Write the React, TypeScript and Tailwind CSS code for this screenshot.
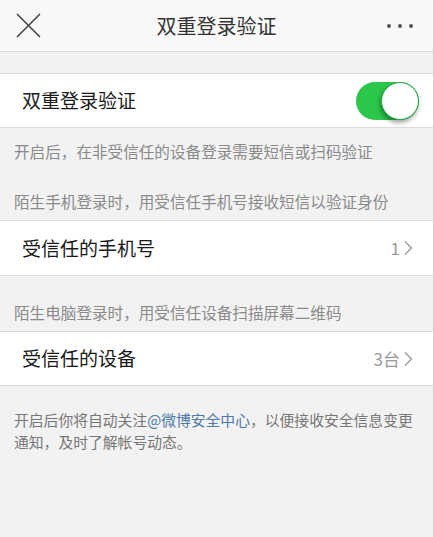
import React from "react";

const font = { fontFamily: '"Noto Sans CJK SC", "Noto Sans", sans-serif' };

function Chevron() {
  return (
    <svg width="10" height="16" viewBox="0 0 10 16" className="ml-[3px]">
      <path d="M2 1.5 L8.5 8 L2 14.5" fill="none" stroke="#9a9a9a" strokeWidth="1.3" />
    </svg>
  );
}

export default function App() {
  return (
    <div className="w-[434px] h-[537px] bg-[#f2f2f2] border-r border-[#d0d0d0] text-[#1a1a1a]" style={font}>
      {/* header */}
      <div className="h-[52px] bg-[#f8f8f8] border-b border-[#dadada] flex items-center justify-between relative">
        <svg width="26" height="26" viewBox="0 0 26 26" className="ml-[15px]">
          <path d="M2 1 L25 24 M25 1 L2 24" stroke="#454545" strokeWidth="1.6" fill="none" />
        </svg>
        <div className="absolute left-0 right-0 text-center text-[20px] text-[#333] pointer-events-none">双重登录验证</div>
        <div className="flex gap-[7px] mr-[20px]">
          <span className="w-[4px] h-[4px] rounded-full bg-[#555]" />
          <span className="w-[4px] h-[4px] rounded-full bg-[#555]" />
          <span className="w-[4px] h-[4px] rounded-full bg-[#555]" />
        </div>
      </div>
      <div className="h-[21px]" />
      {/* toggle row */}
      <div className="h-[55px] bg-white border-y border-[#dadada] flex items-center justify-between pl-[22px] pr-[14px]">
        <span className="text-[19px]">双重登录验证</span>
        <div className="w-[63px] h-[38px] rounded-full bg-[#2cc64a] relative">
          <div className="absolute right-0 top-[0px] w-[38px] h-[38px] rounded-full bg-white border border-[#26a83f] shadow-[-1px_3px_4px_rgba(0,0,0,0.35)]" />
        </div>
      </div>
      <div className="px-[14px] text-[15.6px] text-[#8a8a8a]">
        <div className="pt-[12px] leading-[22px]">开启后，在非受信任的设备登录需要短信或扫码验证</div>
        <div className="pt-[28px] pb-[8px] leading-[22px]">陌生手机登录时，用受信任手机号接收短信以验证身份</div>
      </div>
      <div className="h-[56px] bg-white border-y border-[#dadada] flex items-center justify-between pl-[22px] pr-[20px]">
        <span className="text-[19px]">受信任的手机号</span>
        <span className="flex items-center text-[17px] text-[#999]">1<Chevron /></span>
      </div>
      <div className="px-[14px] text-[15.6px] text-[#8a8a8a]">
        <div className="pt-[25px] pb-[8px] leading-[22px]">陌生电脑登录时，用受信任设备扫描屏幕二维码</div>
      </div>
      <div className="h-[55px] bg-white border-y border-[#dadada] flex items-center justify-between pl-[22px] pr-[20px]">
        <span className="text-[19px]">受信任的设备</span>
        <span className="flex items-center text-[17px] text-[#999]">3台<Chevron /></span>
      </div>
      <div className="px-[14px] pt-[23px] text-[14.8px] leading-[22px] text-[#777]">
        开启后你将自动关注<span className="text-[#4e79a8]">@微博安全中心</span>，以便接收安全信息变更通知，及时了解帐号动态。
      </div>
    </div>
  );
}
